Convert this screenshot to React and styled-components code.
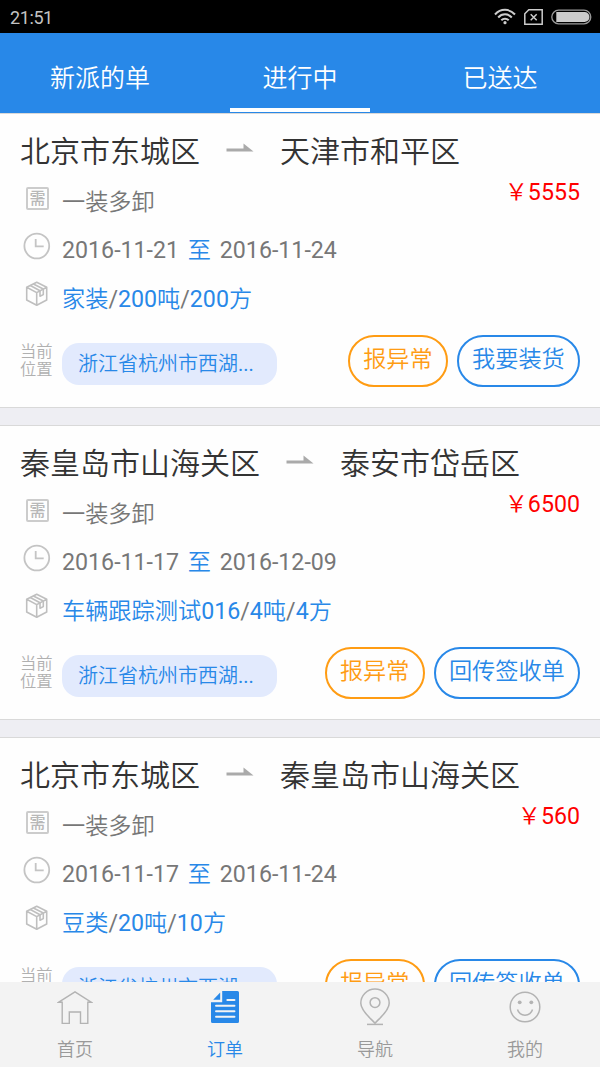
import React, { useState } from 'react';
import styled, { createGlobalStyle } from 'styled-components';

const GlobalStyle = createGlobalStyle`
  * {
    box-sizing: border-box;
  }

  body {
    margin: 0;
    overflow: hidden;
    font-family: Roboto, 'Noto Sans CJK SC', sans-serif;
    font-weight: 350;
    background: #eeeef3;
  }
`;

const Screen = styled.div`
  display: flex;
  flex-direction: column;
  height: 1067px;
  width: 600px;
  overflow: hidden;
`;

const StatusBar = styled.div`
  flex: none;
  display: flex;
  align-items: center;
  justify-content: space-between;
  height: 33px;
  padding: 0 8px 0 10px;
  background: #000;
  color: #c3c3c3;
  font-size: 18px;
  font-weight: 400;
  letter-spacing: -0.4px;

  span {
    padding-top: 2px;
  }
`;

const StatusIcons = styled.div`
  display: flex;
  align-items: center;
  gap: 8px;

  svg {
    display: block;
  }
`;

const Tabs = styled.div`
  flex: none;
  display: grid;
  grid-template-columns: repeat(3, 1fr);
  justify-items: center;
  height: 80px;
  background: #2888e8;
`;

const Tab = styled.button`
  width: 140px;
  height: 79px;
  padding: 16px 0 0;
  border: 0;
  border-bottom: 4px solid ${({ $active }) => ($active ? '#fff' : 'transparent')};
  background: none;
  color: #fff;
  font-family: inherit;
  font-size: 25px;
  font-weight: 350;
  line-height: 36px;
`;

const List = styled.div`
  flex: 1;
  min-height: 0;
  overflow: hidden;
`;

const Card = styled.div`
  height: 295px;
  margin-bottom: 17px;
  padding: 14px 20px 0;
  border-top: 1.5px solid #d9d9d9;
  border-bottom: 1.5px solid #d9d9d9;
  background: #fefefe;
`;

const Route = styled.div`
  display: flex;
  align-items: center;
  gap: 26px;
  height: 49px;
  padding-bottom: 1px;
  color: #333;
  font-size: 30px;
  line-height: 46px;

  svg {
    margin-bottom: 8px;
  }
`;

const InfoRow = styled.div`
  display: flex;
  align-items: center;
  height: 48.5px;
  color: #777;
  font-size: 23.2px;
  line-height: 48px;
  white-space: pre;
`;

const RowText = styled.span`
  padding-top: 1px;
`;

const RowIcon = styled.div`
  flex: none;
  width: 42px;
  height: 36px;
  padding-left: 3px;

  svg {
    display: block;
  }
`;

const Price = styled.span`
  margin-left: auto;
  padding-bottom: 18px;
  color: #f00;
`;

const Blue = styled.span`
  color: #2888e8;
`;

const Until = styled(Blue)`
  margin: 0 3px;
`;

const Latin = styled.span`
  font-weight: 400;
`;

const Footer = styled.div`
  display: flex;
  align-items: flex-start;
  padding-top: 12px;
`;

const PlaceLabel = styled.div`
  width: 42px;
  padding-top: 8px;
  color: #b0b0b0;
  font-size: 16.3px;
  line-height: 18px;
`;

const Place = styled.div`
  width: 215px;
  height: 42px;
  margin-top: 8px;
  padding-left: 16px;
  border-radius: 17px;
  background: #e2eafd;
  color: #2888e8;
  font-size: 20px;
  line-height: 42px;
`;

const Actions = styled.div`
  display: flex;
  gap: 9px;
  margin-left: auto;
`;

const Action = styled.button`
  height: 52px;
  padding: 0 13.2px 4px;
  border: 2px solid currentColor;
  border-radius: 26px;
  background: none;
  color: ${({ $warn }) => ($warn ? '#ff9c13' : '#2888e8')};
  font-family: inherit;
  font-size: 23.2px;
  font-weight: 350;
  line-height: 44px;
`;

const BottomNav = styled.div`
  flex: none;
  display: grid;
  grid-template-columns: repeat(4, 1fr);
  height: 85px;
  background: #f3f3f3;
`;

const NavItem = styled.button`
  display: flex;
  flex-direction: column;
  align-items: center;
  padding: 5px 0 0;
  border: 0;
  background: none;
  color: ${({ $active }) => ($active ? '#2888e8' : '#999')};
  font-family: inherit;
  font-size: 18px;
  font-weight: 350;
  line-height: 26px;

  svg {
    display: block;
    margin-bottom: 8px;
    color: ${({ $active }) => ($active ? '#2888e8' : '#b3b3b3')};
  }
`;

const WifiIcon = () => (
  <svg width="22" height="17" viewBox="0 0 22 17" fill="none" stroke="#ccc" strokeWidth="2">
    <path d="M1 6.5C6.5 .3 15.5 .3 21 6.5M4.2 9.5c3.8-4.2 9.8-4.2 13.6 0M7.3 12.3c2.1-2.2 5.3-2.2 7.4 0" />
    <circle cx="11" cy="14.7" r="1.6" fill="#ccc" stroke="none" />
  </svg>
);

const SimIcon = () => (
  <svg width="19" height="16" viewBox="0 0 19 16" fill="none" stroke="#ccc" strokeWidth="1.5">
    <path d="M4.8 .8h13.4v14.4H.8V4.8zM6.7 5.2l6 6M12.7 5.2l-6 6" />
  </svg>
);

const BatteryIcon = () => (
  <svg width="41" height="16" viewBox="0 0 41 16">
    <rect x=".8" y="1.2" width="39" height="13.6" rx="6.8" fill="none" stroke="#999" strokeWidth="1.3" />
    <path d="M5.3 3h28.2a5 5 0 0 1 0 10H5.3z" fill="#ccc" />
  </svg>
);

const ArrowIcon = () => (
  <svg width="28" height="12" viewBox="0 0 28 12">
    <path d="M.5 6.5h17V1.5L27.5 9.6H.5z" fill="#aaa" />
  </svg>
);

const NeedBox = styled.div`
  display: flex;
  justify-content: center;
  width: 23px;
  height: 23px;
  margin: 4px 0 0 3px;
  border: 2px solid #ccc;
  border-radius: 2px;
  color: #b8b8b8;
  font-size: 16px;
  font-weight: 500;
  line-height: 19px;
`;

const ClockIcon = () => (
  <svg width="28" height="28" viewBox="0 0 28 28" fill="none" stroke="#c4c4c4" strokeWidth="1.8">
    <circle cx="13.8" cy="14" r="12.4" />
    <path d="M12.7 7v7.3h8" />
  </svg>
);

const BoxIcon = () => (
  <svg width="28" height="28" viewBox="0 0 28 28" fill="none" stroke="#bfbfbf" strokeWidth="1.6" strokeLinejoin="round">
    <path d="M13.7 2.3l10 5V20l-10 5.3-10-5.3V7.3zM3.7 7.3l10 5.3 10-5.3M13.7 12.6v12.7" />
    <path d="M10.4 4l9.9 5M7.3 5.500l9.700 5.300v5.500l3.300-1.700V9" />
  </svg>
);

const HomeIcon = () => (
  <svg width="36" height="42" viewBox="0 0 36 42" fill="none" stroke="currentColor" strokeWidth="1.4">
    <path d="M1.8 15.2L18 4.8l16.2 10.4h-3.4v21.2h-7.3V25H12.3v11.4H5.2V15.2z" />
  </svg>
);

const OrderIcon = () => (
  <svg width="36" height="42" viewBox="0 0 36 42">
    <path d="M15.2 4h15.3A1.5 1.5 0 0 1 32 5.5v29a1.5 1.5 0 0 1-1.5 1.5h-25A1.5 1.5 0 0 1 4 34.5V15.2h11.2z" fill="currentColor" />
    <path d="M6.2 12.7l7-7.2v7.2z" fill="currentColor" />
    <path d="M20.3 13h7.2M9 18.8h18.5M9 24.3h18.5M9 29.7h18.5" stroke="#f3f3f3" strokeWidth="1.9" strokeLinecap="round" />
  </svg>
);

const PinIcon = () => (
  <svg width="36" height="42" viewBox="0 0 36 42" fill="none" stroke="currentColor" strokeWidth="1.5">
    <path d="M18 36.2C14 31.5 3.8 24 3.8 16.2a14.2 14.2 0 0 1 28.4 0C32.2 24 22 31.5 18 36.2z" />
    <circle cx="18" cy="15.6" r="4.9" />
    <path d="M10 37.4h16" />
  </svg>
);

const SmileIcon = () => (
  <svg width="36" height="42" viewBox="0 0 36 42" fill="none" stroke="currentColor" strokeWidth="1.5">
    <circle cx="18" cy="20" r="14.8" />
    <path d="M10.5 22.5c2.2 7.5 12.8 7.5 15 0" />
    <circle cx="12.7" cy="15.3" r="1.9" fill="currentColor" stroke="none" />
    <circle cx="24.3" cy="15.3" r="1.9" fill="currentColor" stroke="none" />
  </svg>
);

const tabs = ['新派的单', '进行中', '已送达'];

const orders = [
  {
    from: '北京市东城区',
    to: '天津市和平区',
    price: '5555',
    start: '2016-11-21',
    end: '2016-11-24',
    goods: ['家装', '200吨', '200方'],
    action: '我要装货',
  },
  {
    from: '秦皇岛市山海关区',
    to: '泰安市岱岳区',
    price: '6500',
    start: '2016-11-17',
    end: '2016-12-09',
    goods: ['车辆跟踪测试016', '4吨', '4方'],
    action: '回传签收单',
  },
  {
    from: '北京市东城区',
    to: '秦皇岛市山海关区',
    price: '560',
    start: '2016-11-17',
    end: '2016-11-24',
    goods: ['豆类', '20吨', '10方'],
    action: '回传签收单',
  },
];

const navItems = [
  { label: '首页', Icon: HomeIcon },
  { label: '订单', Icon: OrderIcon },
  { label: '导航', Icon: PinIcon },
  { label: '我的', Icon: SmileIcon },
];

// digits are set a little heavier than the Chinese text around them
const Mixed = ({ text }) =>
  text.split(/(\d+)/).map((s, i) => (i % 2 ? <Latin key={i}>{s}</Latin> : s));

function OrderCard({ order }) {
  return (
    <Card>
      <Route>
        <span>{order.from}</span>
        <ArrowIcon />
        <span>{order.to}</span>
      </Route>
      <InfoRow>
        <RowIcon><NeedBox>需</NeedBox></RowIcon>
        <RowText>一装多卸</RowText>
        <Price>￥<Latin>{order.price}</Latin></Price>
      </InfoRow>
      <InfoRow>
        <RowIcon><ClockIcon /></RowIcon>
        <RowText>
          <Latin>{order.start} </Latin>
          <Until>至</Until>
          <Latin> {order.end}</Latin>
        </RowText>
      </InfoRow>
      <InfoRow>
        <RowIcon><BoxIcon /></RowIcon>
        <RowText>
          {order.goods.map((part, i) => (
            <React.Fragment key={part}>
              {i > 0 && <Latin>/</Latin>}
              <Blue><Mixed text={part} /></Blue>
            </React.Fragment>
          ))}
        </RowText>
      </InfoRow>
      <Footer>
        <PlaceLabel>当前<br />位置</PlaceLabel>
        <Place>浙江省杭州市西湖<Latin>...</Latin></Place>
        <Actions>
          <Action $warn>报异常</Action>
          <Action>{order.action}</Action>
        </Actions>
      </Footer>
    </Card>
  );
}

export default function App() {
  const [tab, setTab] = useState(1);
  const [nav, setNav] = useState(1);

  return (
    <Screen>
      <GlobalStyle />
      <StatusBar>
        <span>21:51</span>
        <StatusIcons>
          <WifiIcon />
          <SimIcon />
          <BatteryIcon />
        </StatusIcons>
      </StatusBar>
      <Tabs>
        {tabs.map((label, i) => (
          <Tab key={label} $active={i === tab} onClick={() => setTab(i)}>{label}</Tab>
        ))}
      </Tabs>
      <List>
        {orders.map((order, i) => (
          <OrderCard key={i} order={order} />
        ))}
      </List>
      <BottomNav>
        {navItems.map(({ label, Icon }, i) => (
          <NavItem key={label} $active={i === nav} onClick={() => setNav(i)}>
            <Icon />
            {label}
          </NavItem>
        ))}
      </BottomNav>
    </Screen>
  );
}
